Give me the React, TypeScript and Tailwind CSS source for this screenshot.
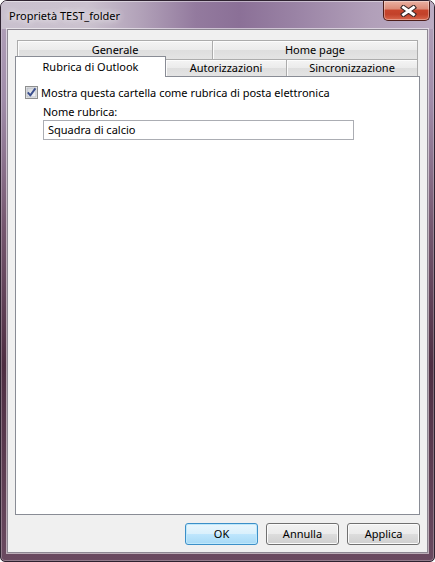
import React from "react";

function Tab({ label, className }: { label: string; className: string }) {
  return (
    <div
      className={
        "flex items-center justify-center border border-b-0 border-[#acacac] bg-[linear-gradient(180deg,#f4f4f4_0%,#ebebeb_50%,#dedede_51%,#e4e4e4_100%)] shadow-[inset_1px_1px_0_#fcfcfc] " +
        className
      }
    >
      <span className="leading-[16px]">{label}</span>
    </div>
  );
}

function Btn({ label, primary }: { label: string; primary?: boolean }) {
  return (
    <div
      className={
        primary
          ? "w-[73px] h-[22px] flex items-center justify-center rounded-[3px] border border-[#3c8fc8] bg-[linear-gradient(180deg,#eaf6fd_0%,#d9f0fc_50%,#bee6fd_51%,#a7d9f5_100%)] shadow-[inset_0_0_0_1px_#bfe8fb]"
          : "w-[73px] h-[22px] flex items-center justify-center rounded-[3px] border border-[#707070] bg-[linear-gradient(180deg,#f2f2f2_0%,#ebebeb_50%,#dddddd_51%,#cfcfcf_100%)] shadow-[inset_0_0_0_1px_#fbfbfb]"
      }
    >
      <span className="leading-[16px]">{label}</span>
    </div>
  );
}

export default function App() {
  return (
    <div className="w-[435px] h-[562px] bg-white">
      <div className="w-[435px] h-[562px] flex flex-col rounded-t-[7px] rounded-b-[5px] border border-[#2e2230] bg-[linear-gradient(180deg,#b4a4bc_0%,#a08ca9_18%,#765870_40%,#4e2e42_65%,#6a4a60_100%)] shadow-[inset_0_0_0_1px_rgba(255,255,255,0.28)] overflow-hidden [font-family:'Noto_Sans',sans-serif] text-[11px] text-black">
        {/* title bar */}
        <div className="h-[28px] flex items-start justify-between bg-[linear-gradient(90deg,#c9c0ce_0%,#cbc2cf_20%,#b2a2b9_32%,#937a9e_45%,#8b7097_55%,#9a83a5_68%,#b19fb9_85%,#bcacc3_100%)] shadow-[inset_0_1px_0_rgba(255,255,255,0.45)]">
          <span className="pl-[8px] pt-[7px] leading-[16px] [text-shadow:0_0_6px_rgba(255,255,255,0.9),0_0_10px_rgba(255,255,255,0.7)]">
            Proprietà TEST_folder
          </span>
          <div className="mr-[4px] w-[47px] h-[20px] rounded-b-[5px] border border-t-0 border-[#4e1d18] bg-[linear-gradient(180deg,#e9b1a3_0%,#dc8c79_40%,#c7442c_50%,#c2412a_70%,#d8674d_100%)] shadow-[inset_0_0_0_1px_rgba(255,255,255,0.35)] flex items-center justify-center pl-[3px]">
            <svg width="17" height="12" viewBox="0 0 17 12">
              <path d="M3.5 2.5 L13.5 9.5 M13.5 2.5 L3.5 9.5" stroke="#3b2a2a" strokeWidth="5" strokeLinecap="square" fill="none" />
              <path d="M3.5 2.5 L13.5 9.5 M13.5 2.5 L3.5 9.5" stroke="#ffffff" strokeWidth="2.8" strokeLinecap="square" fill="none" />
            </svg>
          </div>
        </div>
        {/* client */}
        <div className="flex-1 px-[6px] pb-[8px] flex">
          <div className="flex-1 border border-[#8d8792] bg-[#f0f0f0] shadow-[0_0_0_1px_rgba(255,255,255,0.55)] pt-[10px] px-[7px] flex flex-col">
            {/* tab row 1 */}
            <div className="flex h-[19px] mx-[2px]">
              <Tab label="Generale" className="w-[196px]" />
              <Tab label="Home page" className="-ml-px flex-1" />
            </div>
            {/* tab row 2 */}
            <div className="flex h-[17px]">
              <div className="relative z-10 w-[151px] h-[21px] -mt-[3px] self-start bg-white border border-b-0 border-[#898c95] flex justify-center pt-[2px]">
                <span className="leading-[16px]">Rubrica di Outlook</span>
              </div>
              <Tab label="Autorizzazioni" className="-ml-px w-[122px] h-[17px]" />
              <Tab label="Sincronizzazione" className="-ml-px flex-1 h-[17px] mr-[2px]" />
            </div>
            {/* pane */}
            <div className="h-[439px] border border-[#898c95] bg-white pl-[9px] pt-[9px] flex flex-col">
              <div className="flex items-center gap-[3px] h-[13px]">
                <svg width="13" height="13" viewBox="0 0 13 13">
                  <defs>
                    <linearGradient id="cbg" x1="0" y1="0" x2="1" y2="1">
                      <stop offset="0" stopColor="#cfd2d8" />
                      <stop offset="1" stopColor="#f5f6f8" />
                    </linearGradient>
                  </defs>
                  <rect x="0.5" y="0.5" width="12" height="12" fill="#f4f4f4" stroke="#8e8f8f" />
                  <rect x="2" y="2" width="9" height="9" fill="url(#cbg)" stroke="#b8bcc4" strokeWidth="1" />
                  <path d="M2.8 6.4 L5.3 9.4 L10.4 2.4" stroke="#3b4f8e" strokeWidth="1.9" fill="none" strokeLinejoin="round" />
                </svg>
                <span className="leading-[16px]">Mostra questa cartella come rubrica di posta elettronica</span>
              </div>
              <div className="ml-[18px] mt-[5px] leading-[16px]">Nome rubrica:</div>
              <div className="ml-[18px] w-[311px] h-[20px] border border-[#abadb3] bg-white pl-[4px] flex items-center">
                <span className="leading-[16px]">Squadra di calcio</span>
              </div>
            </div>
            {/* buttons */}
            <div className="mt-[8px] flex justify-end gap-[8px]">
              <Btn label="OK" primary />
              <Btn label="Annulla" />
              <Btn label="Applica" />
            </div>
          </div>
        </div>
      </div>
    </div>
  );
}
